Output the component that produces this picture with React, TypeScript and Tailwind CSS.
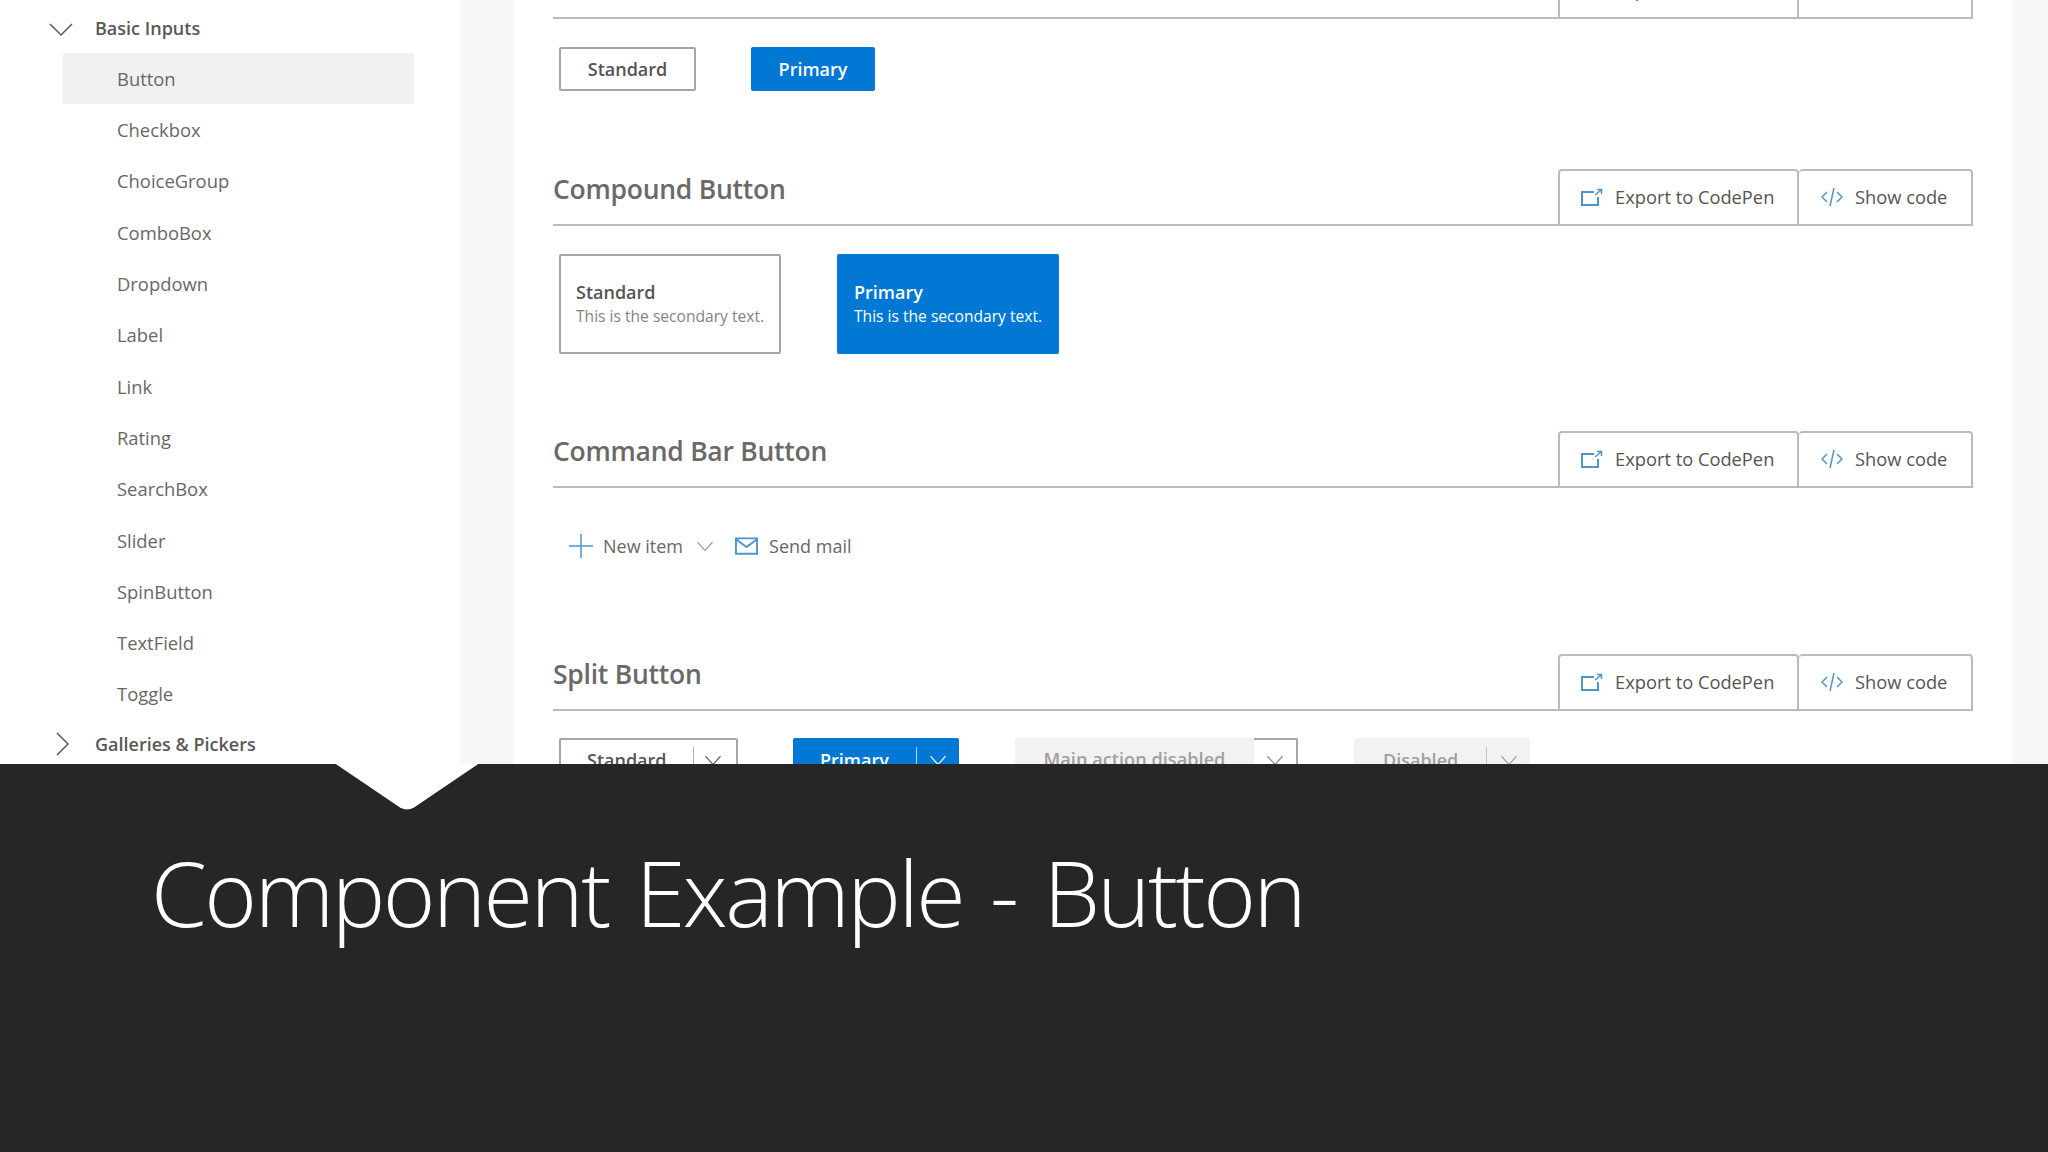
const font = "font-['Open_Sans','Liberation_Sans',sans-serif]";

function Chevron({ dir, className }: { dir: "down" | "right"; className: string }) {
  return (
    <svg viewBox="0 0 24 24" className={className} fill="none" stroke="currentColor" strokeWidth="1.5">
      {dir === "down" ? <path d="M1 7l11 11L23 7" /> : <path d="M7 1l11 11L7 23" />}
    </svg>
  );
}

function ExportIcon() {
  return (
    <svg viewBox="0 0 22 18" className="w-[22px] h-[18px]" fill="none" stroke="#4f94cf" strokeWidth="2">
      <path d="M13 4H1v13h16V9" />
      <path d="M14 7l6-5M16 1.500h4.500V6" strokeWidth="1.500" />
    </svg>
  );
}

function CodeIcon() {
  return (
    <svg viewBox="0 0 22 20" className="w-[22px] h-[20px]" fill="none" stroke="#4f94cf" strokeWidth="1.500">
      <path d="M6 5l-5 5 5 5M16 5l5 5-5 5M13 1L9 19" />
    </svg>
  );
}

function SectionHeader({ title }: { title: string }) {
  return (
    <div className="flex h-[57px] items-stretch justify-between border-b-2 border-[#bdbbba]">
      <h2 className="self-start pt-[2px] text-[26.5px] font-semibold leading-[36px] tracking-[-0.25px] text-[#6b6968]">{title}</h2>
      <div className="flex -mb-[2px] text-[18.3px] text-[#565453]">
        <div className="flex w-[241px] items-center gap-[12px] rounded-t-[4px] border-2 border-[#bdbbba] pb-[2px] pl-[21px]">
          <ExportIcon />
          <span>Export to CodePen</span>
        </div>
        <div className="flex w-[174px] items-center gap-[12px] rounded-t-[4px] border-2 border-l-0 border-[#bdbbba] pb-[2px] pl-[22px]">
          <CodeIcon />
          <span>Show code</span>
        </div>
      </div>
    </div>
  );
}

function NavItem({ label, active }: { label: string; active?: boolean }) {
  return (
    <div className={`flex h-[51.3px] w-[351px] items-center pl-[54px] ${active ? "bg-[#f1f1f1]" : ""}`}>{label}</div>
  );
}

function SplitChevron({ color }: { color: string }) {
  return (
    <svg viewBox="0 0 24 24" className="w-[18px] h-[18px]" fill="none" stroke={color} strokeWidth="1.500">
      <path d="M2 7l10 11L22 7" />
    </svg>
  );
}

export default function App() {
  const items = ["Checkbox", "ChoiceGroup", "ComboBox", "Dropdown", "Label", "Link", "Rating", "SearchBox", "Slider", "SpinButton", "TextField", "Toggle"];
  return (
    <div className={`relative flex h-[1152px] w-[2048px] flex-col overflow-hidden bg-[#262627] ${font}`}>
      <div className="flex h-[764px] shrink-0 overflow-hidden bg-[#f8f7f7]">
        <aside className="h-full w-[460px] shrink-0 bg-white pt-[4px] text-[18.4px] text-[#696766]">
          <div className="flex h-[49px] items-center pl-[49px] font-semibold text-[#5a5857]">
            <Chevron dir="down" className="w-[24px] h-[24px] text-[#5c5a59]" />
            <span className="ml-[22px] text-[18px]">Basic Inputs</span>
          </div>
          <div className="ml-[63px]">
            <NavItem label="Button" active />
            {items.map((i) => (
              <NavItem key={i} label={i} />
            ))}
          </div>
          <div className="flex h-[49px] items-center pl-[50px] font-semibold text-[#5a5857]">
            <Chevron dir="right" className="w-[24px] h-[24px] text-[#5c5a59]" />
            <span className="ml-[21px] text-[18px]">Galleries &amp; Pickers</span>
          </div>
        </aside>
        <div className="w-[54px] shrink-0" />
        <main className="-mt-[38px] h-[802px] w-[1498px] shrink-0 bg-white px-[39px]">
          <SectionHeader title="" />
          <div className="flex h-[150px] items-start gap-[55px] pl-[6px] pt-[28px] text-[18px] font-semibold">
            <div className="flex h-[44px] w-[137px] items-center justify-center rounded-[2px] border-2 border-[#a8a6a5] text-[#565453]">Standard</div>
            <div className="flex h-[44px] w-[124px] items-center justify-center rounded-[2px] bg-[#0078d4] text-white">Primary</div>
          </div>
          <SectionHeader title="Compound Button" />
          <div className="flex h-[205px] items-start gap-[56px] pl-[6px] pt-[28px]">
            <div className="flex h-[100px] w-[222px] flex-col justify-center rounded-[2px] border-2 border-[#a8a6a5] pl-[15px]">
              <span className="text-[18px] font-semibold leading-[24px] text-[#565453]">Standard</span>
              <span className="whitespace-nowrap text-[15.6px] leading-[24px] text-[#858381]">This is the secondary text.</span>
            </div>
            <div className="flex h-[100px] w-[222px] flex-col justify-center rounded-[2px] bg-[#0078d4] pl-[17px] text-white">
              <span className="text-[18px] font-semibold leading-[24px]">Primary</span>
              <span className="whitespace-nowrap text-[15.6px] leading-[24px]">This is the secondary text.</span>
            </div>
          </div>
          <SectionHeader title="Command Bar Button" />
          <div className="flex h-[166px] items-start pl-[16px] pt-[45px] text-[18px] text-[#696766]">
            <svg viewBox="0 0 24 24" className="mt-[1px] h-[24px] w-[24px]" fill="none" stroke="#4f94cf" strokeWidth="1.500">
              <path d="M12 0v24M0 12h24" />
            </svg>
            <span className="ml-[10px] leading-[26px]">New item</span>
            <span className="ml-[13px] mt-[4px]"><SplitChevron color="#9a9897" /></span>
            <svg viewBox="0 0 24 18" className="ml-[21px] mt-[4px] h-[18px] w-[23px]" fill="none" stroke="#4f94cf" strokeWidth="2">
              <path d="M1 1h22v16H1zM1 2l11 8 11-8" />
            </svg>
            <span className="ml-[11px] leading-[26px]">Send mail</span>
          </div>
          <SectionHeader title="Split Button" />
          <div className="flex items-start pl-[6px] pt-[27px] text-[18px] font-semibold">
            <div className="flex h-[44px] w-[179px] items-center rounded-[2px] border-2 border-[#a8a6a5] text-[#565453]">
              <span className="ml-[26px] w-[106px]">Standard</span>
              <span className="h-[26px] w-px bg-[#b9b7b6]" />
              <span className="ml-[10px]"><SplitChevron color="#605e5c" /></span>
            </div>
            <div className="ml-[55px] flex h-[44px] w-[166px] items-center rounded-[2px] bg-[#0078d4] text-white">
              <span className="ml-[27px] w-[96px]">Primary</span>
              <span className="h-[26px] w-px bg-white/70" />
              <span className="ml-[12px]"><SplitChevron color="#ffffff" /></span>
            </div>
            <div className="ml-[56px] flex h-[44px] w-[239px] items-center justify-center rounded-l-[2px] bg-[#f3f2f1] text-[18.2px] text-[#a19f9d]">Main action disabled</div>
            <div className="flex h-[44px] w-[44px] items-center justify-center rounded-r-[2px] border-2 border-l-0 border-[#a8a6a5]"><SplitChevron color="#8a8886" /></div>
            <div className="ml-[56px] flex h-[44px] w-[176px] items-center rounded-[2px] bg-[#f3f2f1] text-[#a19f9d]">
              <span className="ml-[29px] w-[103px]">Disabled</span>
              <span className="h-[26px] w-px bg-[#c8c6c4]" />
              <span className="ml-[13px]"><SplitChevron color="#a19f9d" /></span>
            </div>
          </div>
        </main>
      </div>
      <svg viewBox="0 0 144 47" className="absolute left-[335px] top-[763px] h-[48px] w-[144px]" fill="#ffffff">
        <path d="M0 0H144L79 44Q72 48 65 44Z" />
      </svg>
      <div className="flex-1 pl-[151px] pt-[68px]">
        <h1 className="whitespace-nowrap text-[90px] font-light leading-[120px] tracking-[-2.5px] [word-spacing:6px] text-white">Component Example - Button</h1>
      </div>
    </div>
  );
}
